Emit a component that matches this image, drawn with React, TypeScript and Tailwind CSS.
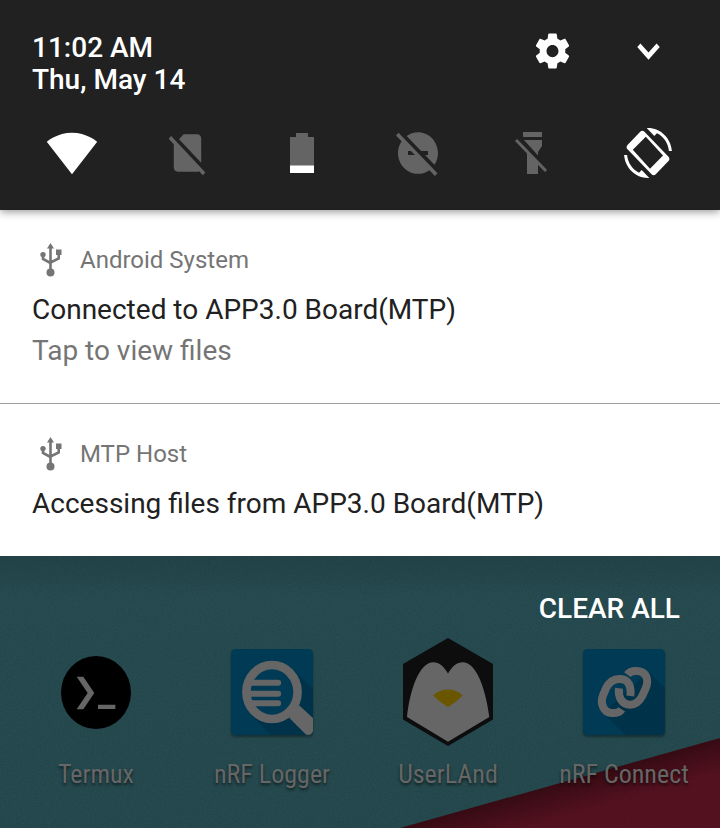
import type { ReactNode } from "react";

const GEAR =
  "M19.43 12.98c.04-.32.07-.64.07-.98s-.03-.66-.07-.98l2.11-1.65c.19-.15.24-.42.12-.64l-2-3.46c-.12-.22-.39-.3-.61-.22l-2.49 1c-.52-.4-1.08-.73-1.69-.98l-.38-2.65C14.46 2.18 14.25 2 14 2h-4c-.25 0-.46.18-.49.42l-.38 2.65c-.61.25-1.17.59-1.69.98l-2.49-1c-.23-.09-.49 0-.61.22l-2 3.46c-.13.22-.07.49.12.64l2.11 1.65c-.04.32-.07.65-.07.98s.03.66.07.98l-2.11 1.65c-.19.15-.24.42-.12.64l2 3.46c.12.22.39.3.61.22l2.49-1c.52.4 1.08.73 1.69.98l.38 2.65c.03.24.24.42.49.42h4c.25 0 .46-.18.49-.42l.38-2.65c.61-.25 1.17-.59 1.69-.98l2.49 1c.23.09.49 0 .61-.22l2-3.46c.12-.22.07-.49-.12-.64l-2.11-1.65zM12 15.5c-1.93 0-3.5-1.57-3.5-3.5s1.57-3.5 3.5-3.5 3.5 1.57 3.5 3.5-1.57 3.5-3.5 3.5z";
const CHEVRON = "M16.3 8.200L12 12.700 7.700 8.200 6 10l6 6.400 6-6.400z";
const WIFI =
  "M12.01 21.49L23.64 7c-.45-.34-4.93-4-11.64-4C5.28 3 .81 6.66.36 7l11.63 14.49.01.01.01-.01z";
const NO_SIM =
  "M18.99 5c0-1.1-.89-2-1.99-2h-7L7.66 5.34 19 16.68 18.99 5zM3.65 3.88L2.38 5.15 5 7.77V19c0 1.1.9 2 2 2h10.01c.35 0 .67-.1.96-.26l1.88 1.88 1.27-1.27L3.65 3.88z";
const DND_OFF =
  "M17 11v2h-1.46l4.68 4.68C21.34 16.07 22 14.11 22 12c0-5.52-4.48-10-10-10-2.11 0-4.07.66-5.68 1.78L13.54 11H17zM2.27 2.27L1 3.54l2.78 2.78C2.66 7.93 2 9.89 2 12c0 5.52 4.48 10 10 10 2.11 0 4.07-.66 5.68-1.78L20.46 23l1.27-1.27L2.27 2.27zM7 13v-2h1.46l2 2H7z";
const ROTATE_ARCS =
  "M16.48 2.52c3.27 1.55 5.61 4.72 5.97 8.48h1.5C23.44 4.84 18.29 0 12 0l-.66.03 3.81 3.81 1.33-1.32zM7.52 21.48C4.25 19.94 1.91 16.76 1.55 13H.05C.56 19.16 5.71 24 12 24l.66-.03-3.81-3.81-1.33 1.32z";
const ROTATE_PHONE =
  "M10.23 1.75c-.59-.59-1.54-.59-2.12 0L1.75 8.11c-.59.59-.59 1.54 0 2.12l12.02 12.02c.59.59 1.54.59 2.12 0l6.36-6.36c.59-.59.59-1.54 0-2.12zM10.9 4.2L4.4 10.4 13 19.6 19.5 13.2z";

type IconProps = { className: string; box?: string; children: ReactNode };

function Icon({ className, box = "0 0 24 24", children }: IconProps) {
  return (
    <svg
      className={"block shrink-0 " + className}
      viewBox={box}
      preserveAspectRatio="none"
      fill="currentColor"
      aria-hidden="true"
    >
      {children}
    </svg>
  );
}

function Toggle({ label, children }: { label: string; children: ReactNode }) {
  return (
    <button
      type="button"
      aria-label={label}
      className="flex h-[50px] w-12 items-center justify-center text-[#646464]"
    >
      {children}
    </button>
  );
}

function UsbIcon() {
  return (
    <Icon className="h-[34px] w-[22px]" box="0 0 22 34">
      <path d="M10.5 0L14 5.5H7z" />
      <path
        d="M10.5 4v24M3 12v4l7.500 4M18.700 11v4.500l-8.200 4"
        fill="none"
        stroke="currentColor"
        strokeWidth="2.6"
      />
      <circle cx="3" cy="11.600" r="2.700" />
      <rect x="16" y="6.500" width="5.500" height="5.500" />
      <circle cx="10.500" cy="29.600" r="4" />
    </Icon>
  );
}

type NotificationProps = { app: string; title: string; detail?: string };

function Notification({ app, title, detail }: NotificationProps) {
  return (
    <article className="bg-white px-8 pt-8 pb-8">
      <header className="flex h-9 items-center gap-[18px] pl-2 text-[#757575]">
        <UsbIcon />
        <span className="text-[24px] leading-9">{app}</span>
      </header>
      <h2 className="mt-3 text-[28px] leading-10 text-[#212121]">{title}</h2>
      {detail && <p className="text-[28px] leading-[41px] text-[#757575]">{detail}</p>}
    </article>
  );
}

function Termux() {
  return (
    <Icon className="h-[73px] w-[70px]" box="123 74 210 219">
      <ellipse cx="228" cy="183.500" rx="105" ry="109.500" fill="#000" />
      <path d="M170 136h20l33 49-33 49h-20l33-49zM234 220h52v13h-52z" fill="#666" />
    </Icon>
  );
}

function NrfLogger() {
  return (
    <Icon className="h-[86px] w-[82px] drop-shadow-[0_2px_1px_rgba(0,0,0,0.35)]" box="93 57 247 258">
      <rect x="93" y="57" width="247" height="258" rx="13" fill="#003a55" />
      <path d="M282 120L340 178V302q0 13-13 13H212L155 254z" fill="#00324a" />
      <ellipse cx="216.500" cy="186" rx="77" ry="81" fill="#003a55" stroke="#666" strokeWidth="26" />
      <path
        d="M156 158.500h79M152 191h83M156 220h79"
        fill="none"
        stroke="#666"
        strokeWidth="18"
        strokeLinecap="round"
      />
      <path d="M298 226L340 264V303q-4 12-15 12-7 0-11-6L268 263z" fill="#666" />
    </Icon>
  );
}

function UserLAnd() {
  return (
    <Icon className="h-[108px] w-[90px]" box="101 53 270 325">
      <path d="M236 53L371 131V298L236 378 101 298V131z" fill="#0d0d0d" />
      <path
        d="M236 160C222 136 209 126 192 126 150 126 121 210 113 291L236 365 360 291C350 210 322 126 280 126 263 126 250 136 236 160z"
        fill="#666"
      />
      <path d="M191 226Q211 208 236 208T280 226Q262 245 236 261 210 245 191 226z" fill="#6b5600" />
    </Icon>
  );
}

function NrfConnect() {
  return (
    <Icon className="h-[86px] w-[82px] drop-shadow-[0_2px_1px_rgba(0,0,0,0.35)]" box="159 207 246 258">
      <rect x="159" y="207" width="246" height="258" rx="13" fill="#003a55" />
      <path d="M356 276L405 325V452q0 13-13 13H288L218 400z" fill="#00324a" />
      <g fill="none" stroke="#666" strokeWidth="24">
        <path d="M301 348C304 322 298 298 270 297 249 296 236 309 228 325L219 346C210 370 220 397 244 399 260 400 270 396 275 388" />
        <path d="M267 325C264 350 274 374 301 374 318 373 329 363 337 347L347 325C358 300 349 274 322 273 306 272 297 277 292 284" />
      </g>
    </Icon>
  );
}

function Shortcut({ name, children }: { name: string; children: ReactNode }) {
  return (
    <li className="flex flex-col items-center">
      <div className="flex h-[108px] items-center">{children}</div>
      <span className="mt-[10px] text-[26px] leading-9 whitespace-nowrap text-[#666] [font-family:'Roboto_Condensed',Roboto,sans-serif] [text-shadow:0_2px_3px_rgba(0,0,0,0.6)]">
        {name}
      </span>
    </li>
  );
}

function Wallpaper() {
  return (
    <svg
      className="absolute inset-0 h-full w-full"
      viewBox="0 0 720 272"
      preserveAspectRatio="none"
      aria-hidden="true"
    >
      <defs>
        <linearGradient id="teal" x1="0" y1="0" x2="0" y2="1">
          <stop offset="0" stopColor="#24454a" />
          <stop offset="0.150" stopColor="#274d52" />
          <stop offset="1" stopColor="#264b50" />
        </linearGradient>
        <linearGradient id="maroon" gradientUnits="userSpaceOnUse" x1="560" y1="227" x2="569" y2="259">
          <stop offset="0" stopColor="#390c15" />
          <stop offset="1" stopColor="#561220" />
        </linearGradient>
        <filter id="grain" x="0" y="0" width="100%" height="100%">
          <feTurbulence type="fractalNoise" baseFrequency="0.6" numOctaves="2" />
          <feColorMatrix values="0 0 0 0 0  0 0 0 0 0  0 0 0 0 0  0.5 0 0 0 -0.12" />
        </filter>
      </defs>
      <rect width="720" height="272" fill="url(#teal)" />
      <path d="M400 272L720 182V272z" fill="url(#maroon)" />
      <rect width="720" height="272" filter="url(#grain)" opacity="0.300" />
    </svg>
  );
}

export default function App() {
  return (
    <main className="flex min-h-screen flex-col bg-[#264b50] [font-family:Roboto,sans-serif]">
      <section className="relative z-10 bg-[#212121] px-8 pt-8 pb-8 text-white shadow-[0_2px_8px_rgba(0,0,0,0.4)]">
        <div className="flex items-start justify-between">
          <div className="text-[28px] leading-8 font-medium">
            <time className="block">11:02 AM</time>
            <time className="block">Thu, May 14</time>
          </div>
          <div className="flex h-[38px] items-center gap-[53px] pr-[17px]">
            <button type="button" aria-label="Settings">
              <Icon className="h-[42px] w-[41px]">
                <path d={GEAR} />
              </Icon>
            </button>
            <button type="button" aria-label="Expand quick settings">
              <Icon className="h-12 w-[45px]">
                <path d={CHEVRON} />
              </Icon>
            </button>
          </div>
        </div>
        <div className="mt-8 flex justify-between px-4">
          <Toggle label="Wi-Fi">
            <Icon className="h-[54px] w-[52px] text-white">
              <path d={WIFI} />
            </Icon>
          </Toggle>
          <Toggle label="No SIM card">
            <Icon className="h-[50px] w-[47px]">
              <path d={NO_SIM} />
            </Icon>
          </Toggle>
          <Toggle label="Battery">
            <Icon className="h-10 w-6" box="0 0 24 40">
              <path d="M6 0h12v4h6v36H0V4h6z" />
              <path d="M0 32.500h24V40H0z" fill="#fff" />
            </Icon>
          </Toggle>
          <Toggle label="Do not disturb">
            <Icon className="h-[50px] w-12">
              <path d={DND_OFF} />
            </Icon>
          </Toggle>
          <Toggle label="Flashlight">
            <Icon className="h-[42px] w-9" box="0 0 36 42">
              <path d="M8 0h19v5H8zM9 8h18v6l-4 6v3.500zM12 19.500l11 11V42H12z" />
              <path d="M1 8L31 39" stroke="currentColor" strokeWidth="3" />
            </Icon>
          </Toggle>
          <Toggle label="Auto-rotate">
            <Icon className="h-[50px] w-12 text-white">
              <path d={ROTATE_ARCS} />
              <path d={ROTATE_PHONE} fillRule="evenodd" />
            </Icon>
          </Toggle>
        </div>
      </section>

      <section aria-label="Notifications" className="divide-y divide-[#a0a0a0]">
        <Notification
          app="Android System"
          title="Connected to APP3.0 Board(MTP)"
          detail="Tap to view files"
        />
        <Notification app="MTP Host" title="Accessing files from APP3.0 Board(MTP)" />
      </section>

      <section className="relative flex-1">
        <Wallpaper />
        <div className="relative px-2 pt-[33px]">
          <div className="flex justify-end pr-8">
            <button type="button" className="text-[28px] leading-10 font-medium text-white">
              CLEAR ALL
            </button>
          </div>
          <ul className="mt-[9px] grid grid-cols-4">
            <Shortcut name="Termux">
              <Termux />
            </Shortcut>
            <Shortcut name="nRF Logger">
              <NrfLogger />
            </Shortcut>
            <Shortcut name="UserLAnd">
              <UserLAnd />
            </Shortcut>
            <Shortcut name="nRF Connect">
              <NrfConnect />
            </Shortcut>
          </ul>
        </div>
      </section>
    </main>
  );
}
